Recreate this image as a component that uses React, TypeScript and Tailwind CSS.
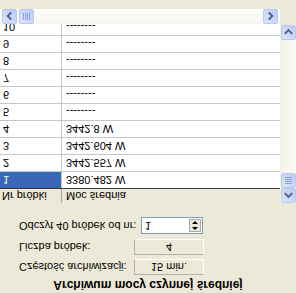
import React from 'react';

const rows = [
  { nr: '1', val: '3380.482 W' },
  { nr: '2', val: '3442.557 W' },
  { nr: '3', val: '3442.604 W' },
  { nr: '4', val: '3442.8 W' },
  { nr: '5', val: '--------' },
  { nr: '6', val: '--------' },
  { nr: '7', val: '--------' },
  { nr: '8', val: '--------' },
  { nr: '9', val: '--------' },
  { nr: '10', val: '--------' },
];

const Arrow: React.FC<{ dir: 'up' | 'down' | 'left' | 'right' }> = ({ dir }) => {
  const d =
    dir === 'up'
      ? 'M3 9 L7 5 L11 9'
      : dir === 'down'
      ? 'M3 5 L7 9 L11 5'
      : dir === 'left'
      ? 'M9 3 L5 7 L9 11'
      : 'M5 3 L9 7 L5 11';
  return (
    <svg width="14" height="14" viewBox="0 0 14 14">
      <path d={d} fill="none" stroke="#4d6185" strokeWidth="2" />
    </svg>
  );
};

const SbButton: React.FC<{ dir: 'up' | 'down' | 'left' | 'right' }> = ({ dir }) => (
  <div className="w-[15px] h-[15px] rounded-[2px] border border-[#b9c9ef] bg-gradient-to-br from-[#dbe5fd] to-[#b8cbf6] flex items-center justify-center">
    <Arrow dir={dir} />
  </div>
);

const Grip: React.FC<{ vertical?: boolean }> = ({ vertical }) => (
  <div className="w-[15px] h-[15px] rounded-[2px] border border-[#b9c9ef] bg-gradient-to-br from-[#dbe5fd] to-[#b8cbf6] flex items-center justify-center">
    <div className={vertical ? 'flex flex-col gap-[1px]' : 'flex gap-[1px]'}>
      {[0, 1, 2, 3].map((i) => (
        <div key={i} className={vertical ? 'w-[7px] h-[1px] bg-[#eef3ff] border-b border-[#8ca2d6]' : 'h-[7px] w-[1px] bg-[#8ca2d6]'} />
      ))}
    </div>
  </div>
);

export default function App() {
  return (
    <div className="w-[296px] h-[293px] overflow-hidden bg-[#ece9d8]">
      <div
        className="w-[296px] h-[293px] -scale-y-100 flex flex-col text-[11px] text-black"
        style={{ fontFamily: '"Liberation Sans", Arial, sans-serif' }}
      >
        <div className="h-[17px] pt-[1px] text-center font-bold text-[12px] leading-[14px]">
          Archiwum mocy czynnej średniej
        </div>

        <div className="flex items-center h-[16px] mt-[1px]">
          <span className="w-[134px] pl-[19px]">Częstość archiwizacji:</span>
          <div className="w-[70px] h-[16px] border border-[#b4b1a3] border-r-white border-b-white flex items-center justify-center">
            15 min.
          </div>
        </div>

        <div className="flex items-center h-[16px] mt-[4px]">
          <span className="w-[134px] pl-[19px]">Liczba próbek:</span>
          <div className="w-[70px] h-[16px] border border-[#b4b1a3] border-r-white border-b-white flex items-center justify-center">
            4
          </div>
        </div>

        <div className="flex items-center h-[17px] mt-[5px]">
          <span className="w-[141px] pl-[19px] whitespace-nowrap">Odczyt 40 próbek od nr:</span>
          <div className="w-[62px] h-[17px] border border-[#7f9db9] bg-white flex items-center justify-between pl-[3px] pr-[1px]">
            <span>1</span>
            <div className="w-[12px] h-[13px] bg-[#ece9d8] border border-[#a9a9a9] flex flex-col items-center justify-center">
              <svg width="8" height="11" viewBox="0 0 8 11">
                <path d="M1 4 L4 1 L7 4 Z M1 7 L4 10 L7 7 Z" fill="#000" />
              </svg>
            </div>
          </div>
        </div>

        <div className="h-[14px]" />

        <div className="flex h-[195px]">
          <div className="w-[280px] flex flex-col">
            <div className="flex-1 overflow-hidden bg-white">
              <div className="flex h-[14px] bg-[#ece9d8] border-b border-[#3a3a3a] leading-[14px] box-content">
                <div className="w-[62px] pl-[2px] border-r border-[#aca899] whitespace-nowrap">Nr próbki</div>
                <div className="pl-[4px] whitespace-nowrap">Moc średnia</div>
              </div>
              {rows.map((r, i) => (
                <div key={r.nr} className="flex h-[17px] border-b border-[#c6c6c6] leading-[16px]">
                  <div
                    className={
                      'w-[62px] pl-[3px] border-r border-[#c6c6c6] ' +
                      (i === 0 ? 'bg-[#3a67b5] text-white' : '')
                    }
                  >
                    {r.nr}
                  </div>
                  <div className="pl-[4px] whitespace-nowrap">{r.val}</div>
                </div>
              ))}
            </div>
            <div className="h-[15px] mb-[1px] flex items-center justify-between bg-gradient-to-b from-[#f6f6f2] to-[#fdfdfb] px-[2px]">
              <div className="flex gap-[2px]">
                <SbButton dir="left" />
                <Grip />
              </div>
              <SbButton dir="right" />
            </div>
          </div>
          <div className="w-[16px] flex flex-col">
            <div className="h-[178px] flex flex-col justify-between bg-gradient-to-r from-[#f4f2e8] to-[#fbfaf5] pl-[1px]">
              <div className="flex flex-col">
                <SbButton dir="up" />
                <Grip vertical />
              </div>
              <SbButton dir="down" />
            </div>
          </div>
        </div>
      </div>
    </div>
  );
}
